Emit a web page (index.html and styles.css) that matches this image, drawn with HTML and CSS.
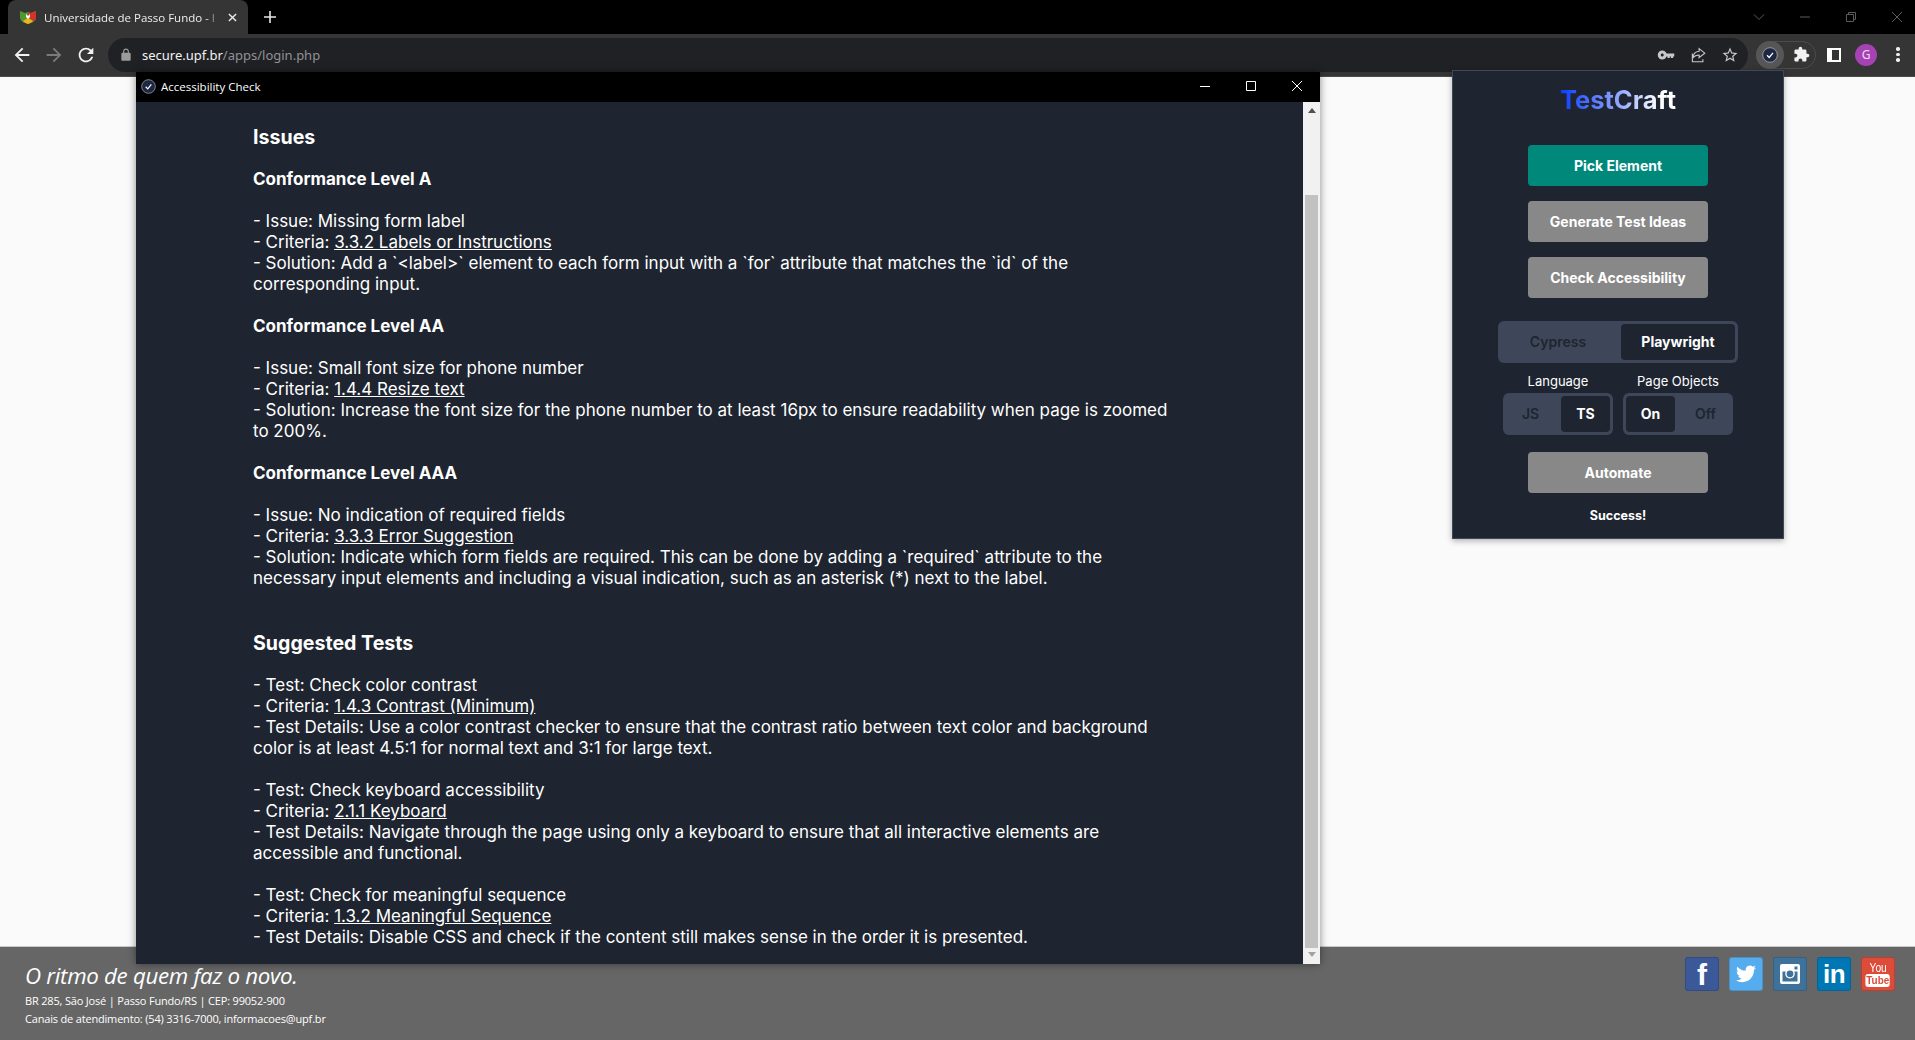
FILE: index.html
```html
<!DOCTYPE html>
<html lang="pt">
<head>
<meta charset="utf-8">
<title>Universidade de Passo Fundo</title>
<link rel="stylesheet" href="styles.css">
</head>
<body>
<div class="screen">
  <header class="tabstrip">
    <div class="tab">
      <svg class="favicon" viewBox="0 0 16 16"><path d="M0 2l5 2 3-1 3 1 5-2v6c0 4-4 6-8 7-4-1-8-3-8-7z" fill="#4f9a2e"/><path d="M8 3l3 1 5-2v6c0 2-1 3.500-2 4.500L8 8z" fill="#d3342a"/><path d="M3 12l5-3 5 3c-1.500 1.500-3 2.400-5 3-2-.6-3.500-1.500-5-3z" fill="#f2b01e"/><path d="M6 5l2 2 2-2v3l-2 2-2-2z" fill="#fff"/></svg>
      <span class="tab-title">Universidade de Passo Fundo - I</span>
      <svg class="tab-close" viewBox="0 0 10 10"><path d="M1 1l8 8M9 1l-8 8"/></svg>
    </div>
    <svg class="newtab" viewBox="0 0 12 12"><path d="M6 0v12M0 6h12"/></svg>
    <div class="caption">
      <svg class="cap-ic" viewBox="0 0 12 12"><path d="M1 3.500l5 5 5-5"/></svg>
      <svg class="cap-ic" viewBox="0 0 12 12"><path d="M1 6h10"/></svg>
      <svg class="cap-ic" viewBox="0 0 12 12"><path d="M1.500 3.500h7v7h-7zM3.500 3.500v-2h7v7h-2"/></svg>
      <svg class="cap-ic" viewBox="0 0 12 12"><path d="M1 1l10 10M11 1L1 11"/></svg>
    </div>
  </header>
  <nav class="toolbar">
    <svg class="nav-ic" viewBox="0 0 24 24"><path d="M20 11H7.830l5.590-5.590L12 4l-8 8 8 8 1.410-1.410L7.830 13H20v-2z"/></svg>
    <svg class="nav-ic dim" viewBox="0 0 24 24"><path d="M4 11h12.170l-5.590-5.590L12 4l8 8-8 8-1.410-1.410L16.170 13H4v-2z"/></svg>
    <svg class="nav-ic" viewBox="0 0 24 24"><path d="M17.650 6.350A7.958 7.958 0 0 0 12 4c-4.420 0-7.990 3.580-7.990 8s3.570 8 7.990 8c3.730 0 6.840-2.550 7.730-6h-2.080A5.990 5.990 0 0 1 12 18c-3.310 0-6-2.690-6-6s2.690-6 6-6c1.660 0 3.140.690 4.220 1.780L13 11h7V4l-2.350 2.350z"/></svg>
    <div class="omnibox">
      <svg class="lock" viewBox="0 0 24 24"><path d="M18 8h-1V6c0-2.760-2.240-5-5-5S7 3.240 7 6v2H6c-1.100 0-2 .9-2 2v10c0 1.100.9 2 2 2h12c1.100 0 2-.9 2-2V10c0-1.100-.9-2-2-2zM9 6c0-1.660 1.340-3 3-3s3 1.340 3 3v2H9V6z"/></svg>
      <span class="url"><span class="host">secure.upf.br</span>/apps/login.php</span>
      <div class="omni-icons">
        <svg class="omni-ic" viewBox="0 0 24 24"><path d="M12.650 10C11.830 7.670 9.610 6 7 6c-3.310 0-6 2.690-6 6s2.690 6 6 6c2.610 0 4.830-1.670 5.650-4H14v2h3v-2h1.500v2h3v-2H23v-4H12.650zM7 14c-1.100 0-2-.9-2-2s.9-2 2-2 2 .9 2 2-.9 2-2 2z"/></svg>
        <svg class="omni-ic line" viewBox="0 0 24 24"><path d="M4.500 10v11h14v-3.500M13.500 3.500l7.500 6-7.500 6v-3.500c-4 0-6.500 1.500-8.500 4 .5-4.500 3.500-8.500 8.500-9z"/></svg>
        <svg class="omni-ic" viewBox="0 0 24 24"><path d="M22 9.240l-7.190-.62L12 2 9.190 8.630 2 9.240l5.460 4.730L5.820 21 12 17.270 18.180 21l-1.630-7.030L22 9.240zM12 15.400l-3.760 2.270 1-4.280-3.320-2.880 4.380-.38L12 6.100l1.710 4.040 4.380.38-3.320 2.880 1 4.280L12 15.400z"/></svg>
      </div>
    </div>
    <div class="ext-pill">
      <div class="ext-active">
        <svg class="ext-logo" viewBox="0 0 16 16"><circle cx="8" cy="8" r="7.300"/><path d="M5 8.300l2.200 2.200L11 5.800"/></svg>
      </div>
      <svg class="puzzle" viewBox="0 0 24 24"><path d="M20.500 11H19V7c0-1.100-.9-2-2-2h-4V3.500C13 2.120 11.880 1 10.500 1S8 2.120 8 3.500V5H4c-1.100 0-1.990.9-1.990 2v3.800H3.500c1.490 0 2.700 1.210 2.700 2.700s-1.210 2.700-2.700 2.700H2V20c0 1.100.9 2 2 2h3.800v-1.500c0-1.490 1.210-2.700 2.700-2.700 1.490 0 2.700 1.210 2.700 2.700V22H17c1.100 0 2-.9 2-2v-4h1.500c1.380 0 2.500-1.120 2.500-2.500S21.880 11 20.500 11z"/></svg>
    </div>
    <div class="sidepanel"><span class="sidepanel-inner"></span></div>
    <div class="avatar">G</div>
    <div class="kebab"><span></span><span></span><span></span></div>
  </nav>
  <main class="page"></main>
  <footer class="footer">
    <div class="footer-text">
      <p class="slogan">O ritmo de quem faz o novo.</p>
      <p class="addr">BR 285, São José | Passo Fundo/RS | CEP: 99052-900</p>
      <p class="addr">Canais de atendimento: (54) 3316-7000, informacoes@upf.br</p>
    </div>
    <div class="social">
      <span class="soc fb">f</span>
      <span class="soc tw"><svg viewBox="0 0 24 24"><path d="M23.953 4.570a10 10 0 01-2.825.775 4.958 4.958 0 002.163-3.128c-.95.555-2.005.959-3.127 1.184a4.920 4.920 0 00-8.384 4.482C7.690 8.095 4.067 6.130 1.640 3.162a4.822 4.822 0 00-.666 2.475c0 1.710.87 3.213 2.188 4.096a4.904 4.904 0 01-2.228-.616v.06a4.923 4.923 0 003.946 4.827 4.996 4.996 0 01-2.212.085 4.936 4.936 0 004.604 3.417 9.867 9.867 0 01-6.102 2.105c-.39 0-.779-.023-1.170-.067a13.995 13.995 0 007.557 2.209c9.053 0 13.998-7.496 13.998-13.985 0-.21 0-.42-.015-.63A9.935 9.935 0 0024 4.590z"/></svg></span>
      <span class="soc ig"><svg viewBox="0 0 20 20"><path fill-rule="evenodd" d="M2 0h16a2 2 0 012 2v16a2 2 0 01-2 2H2a2 2 0 01-2-2V2a2 2 0 012-2zm.5 7.500v10h15v-10h-3.200a4.800 4.800 0 11-8.600 0zM10 6.400a3.400 3.400 0 100 6.800 3.400 3.400 0 000-6.800zM14.500 2.500v3h3v-3z"/></svg></span>
      <span class="soc li">in</span>
      <span class="soc yt"><span class="yt-you">You</span><span class="yt-tube">Tube</span></span>
    </div>
  </footer>

  <section class="window">
    <div class="win-title">
      <svg class="win-logo" viewBox="0 0 16 16"><circle cx="8" cy="8" r="7.300"/><path d="M5 8.300l2.200 2.200L11 5.800"/></svg>
      <span class="win-name">Accessibility Check</span>
      <div class="win-controls">
        <svg class="win-ic" viewBox="0 0 12 12"><path d="M1 6.500h10"/></svg>
        <svg class="win-ic" viewBox="0 0 12 12"><path d="M1.500 1.500h9v9h-9z"/></svg>
        <svg class="win-ic" viewBox="0 0 12 12"><path d="M1 1l10 10M11 1L1 11"/></svg>
      </div>
    </div>
    <div class="win-body">
      <article class="report">
        <h2 class="h-issues">Issues</h2>
        <h3>Conformance Level A</h3>
        <p>- Issue: Missing form label<br>- Criteria: <a href="#">3.3.2 Labels or Instructions</a><br>- Solution: Add a `&lt;label&gt;` element to each form input with a `for` attribute that matches the `id` of the<br>corresponding input.</p>
        <h3>Conformance Level AA</h3>
        <p>- Issue: Small font size for phone number<br>- Criteria: <a href="#">1.4.4 Resize text</a><br>- Solution: Increase the font size for the phone number to at least 16px to ensure readability when page is zoomed<br>to 200%.</p>
        <h3>Conformance Level AAA</h3>
        <p>- Issue: No indication of required fields<br>- Criteria: <a href="#">3.3.3 Error Suggestion</a><br>- Solution: Indicate which form fields are required. This can be done by adding a `required` attribute to the<br>necessary input elements and including a visual indication, such as an asterisk (*) next to the label.</p>
        <h2 class="h-tests">Suggested Tests</h2>
        <p>- Test: Check color contrast<br>- Criteria: <a href="#">1.4.3 Contrast (Minimum)</a><br>- Test Details: Use a color contrast checker to ensure that the contrast ratio between text color and background<br>color is at least 4.5:1 for normal text and 3:1 for large text.</p>
        <p>- Test: Check keyboard accessibility<br>- Criteria: <a href="#">2.1.1 Keyboard</a><br>- Test Details: Navigate through the page using only a keyboard to ensure that all interactive elements are<br>accessible and functional.</p>
        <p>- Test: Check for meaningful sequence<br>- Criteria: <a href="#">1.3.2 Meaningful Sequence</a><br>- Test Details: Disable CSS and check if the content still makes sense in the order it is presented.</p>
      </article>
      <div class="scrollbar">
        <span class="arrow-up"></span>
        <span class="thumb"></span>
        <span class="arrow-down"></span>
      </div>
    </div>
  </section>

  <aside class="popup">
    <h1 class="brand">TestCraft</h1>
    <div class="actions">
      <button class="btn teal">Pick Element</button>
      <button class="btn">Generate Test Ideas</button>
      <button class="btn">Check Accessibility</button>
    </div>
    <div class="seg seg-wide"><span class="opt">Cypress</span><span class="opt on">Playwright</span></div>
    <div class="options">
      <div class="opt-col">
        <span class="opt-label">Language</span>
        <div class="seg"><span class="opt">JS</span><span class="opt on">TS</span></div>
      </div>
      <div class="opt-col">
        <span class="opt-label">Page Objects</span>
        <div class="seg"><span class="opt on">On</span><span class="opt">Off</span></div>
      </div>
    </div>
    <button class="btn automate">Automate</button>
    <p class="status">Success!</p>
  </aside>
</div>
</body>
</html>
```

FILE: styles.css
```css
* { box-sizing: border-box; }
html, body { margin: 0; height: 100%; overflow: hidden; }
body { font-family: "Open Sans", sans-serif; background: #fafafa; }
svg { display: block; flex: none; }
p, h1, h2, h3 { margin: 0; }

.screen { position: relative; width: 1915px; height: 1040px; display: flex; flex-direction: column; }

/* browser chrome */
.tabstrip { height: 34px; background: #000; display: flex; align-items: center; padding-left: 8px; flex: none; }
.tab { width: 240px; height: 34px; background: #353535; border-radius: 8px 8px 0 0; display: flex; align-items: center; padding: 0 11px 0 12px; color: #eee; font-size: 11.500px; }
.favicon { width: 16px; height: 16px; margin-right: 8px; }
.tab-title { flex: 1; white-space: nowrap; -webkit-mask-image: linear-gradient(to right, #000 92%, transparent 100%); mask-image: linear-gradient(to right, #000 92%, transparent 100%); }
.tab-close { width: 9px; height: 9px; margin-left: 8px; fill: none; stroke: #e8e8e8; stroke-width: 1.600; }
.newtab { width: 12px; height: 12px; margin-left: 16px; fill: none; stroke: #e8e8e8; stroke-width: 1.600; }
.caption { margin-left: auto; display: flex; gap: 34px; padding-right: 12px; }
.cap-ic { width: 12px; height: 12px; fill: none; stroke: #5c5c5c; stroke-width: 1; }

.toolbar { height: 43px; background: #353535; border-bottom: 1px solid #4a4a4a; display: flex; align-items: center; padding: 0 0 1px 11px; flex: none; }
.nav-ic { width: 22px; height: 22px; fill: #f1f1f1; margin-right: 10px; }
.nav-ic.dim { fill: #7b7b7b; }
.omnibox { width: 1640px; height: 34px; margin-left: 1px; border-radius: 17px; background: #202124; display: flex; align-items: center; padding-left: 11px; }
.lock { width: 14px; height: 14px; fill: #9b9b9b; margin-right: 9px; }
.url { font-family: "Noto Sans", sans-serif; font-size: 13px; color: #8f9296; }
.host { color: #f1f3f4; }
.omni-icons { margin-left: auto; display: flex; gap: 14px; padding-right: 9px; }
.omni-ic { width: 18px; height: 18px; fill: #c7c7c7; }
.omni-ic.line { fill: none; stroke: #c7c7c7; stroke-width: 1.500; }

.ext-pill { width: 60px; height: 28px; margin-left: 8px; border: 1px solid #4b4b4b; border-radius: 14px; display: flex; align-items: center; }
.ext-active { width: 28px; height: 28px; margin: -1px 0 -1px -1px; border-radius: 50%; background: #565656; display: flex; align-items: center; justify-content: center; }
.ext-logo { width: 16px; height: 16px; }
.ext-logo circle, .win-logo circle { fill: #1e2742; stroke: #b8bcc6; stroke-width: .7; }
.ext-logo path, .win-logo path { fill: none; stroke: #fff; stroke-width: 1.300; }
.puzzle { width: 17px; height: 17px; fill: #f1f1f1; margin-left: 9px; }
.sidepanel { width: 14px; height: 14px; margin-left: 11px; border: 2px solid #fff; border-left-width: 3px; background: #fff; display: flex; justify-content: flex-end; }
.sidepanel-inner { width: 7px; background: #353535; }
.avatar { width: 22px; height: 22px; margin-left: 14px; border-radius: 50%; background: #a742b5; color: #f3ddf6; font-family: "Noto Sans", sans-serif; font-size: 12px; display: flex; align-items: center; justify-content: center; }
.kebab { width: 4px; margin-left: 19px; display: flex; flex-direction: column; gap: 2px; }
.kebab span { width: 3.500px; height: 3.500px; background: #f1f1f1; border-radius: 50%; }

.page { flex: 1; background: #fafafa; }

/* footer */
.footer { height: 94px; background: #666; border-top: 1px solid #c9c9c9; display: flex; justify-content: space-between; padding: 13px 20px 0 25px; color: #fff; flex: none; }
.slogan { font-family: "Open Sans", sans-serif; font-style: italic; font-size: 22.300px; line-height: 31px; letter-spacing: -.3px; margin-bottom: 1px; }
.addr { font-family: "Open Sans", sans-serif; font-size: 11px; line-height: 18px; letter-spacing: -.18px; }
.social { display: flex; gap: 10px; margin-top: -3px; }
.soc { width: 34px; height: 34px; border-radius: 3px; border: 1px solid rgba(0,0,0,.15); display: flex; flex-direction: column; align-items: center; justify-content: center; color: #fff; font-family: "Liberation Sans", sans-serif; font-weight: 700; overflow: hidden; }
.soc svg { fill: #fff; }
.fb { background: #3b5998; font-size: 30px; line-height: 34px; padding-top: 2px; }
.tw { background: #55acee; }
.tw svg { width: 20px; height: 20px; }
.ig { background: #3f729b; }
.ig svg { width: 20px; height: 20px; }
.li { background: #0077b5; font-size: 26px; line-height: 34px; letter-spacing: -.5px; }
.yt { background: #dd4b39; }
.yt-you { font-size: 12px; line-height: 12px; font-weight: 400; transform: scaleX(.85); }
.yt-tube { font-size: 11px; line-height: 13px; padding: 0 1px; background: #fff; color: #dd4b39; border-radius: 3px; transform: scaleX(.9); }

/* floating windows */
.window { position: absolute; left: 136px; top: 72px; width: 1184px; height: 892px; display: flex; flex-direction: column; box-shadow: 0 0 8px rgba(0,0,0,.45); }
.win-title { height: 30px; background: #000; display: flex; align-items: center; padding: 0 0 2px 5px; color: #fff; flex: none; }
.win-logo { width: 15px; height: 15px; margin-right: 5px; }
.win-name { font-size: 11.500px; }
.win-controls { margin-left: auto; display: flex; gap: 34px; padding-right: 17px; }
.win-ic { width: 12px; height: 12px; fill: none; stroke: #fff; stroke-width: 1; }
.win-body { flex: 1; display: flex; min-height: 0; }
.report { flex: 1; background: #1e2530; color: #fff; padding: 22px 0 0 117px; font-family: Inter, sans-serif; font-size: 17px; line-height: 21px; overflow: hidden; white-space: nowrap; }
.report h2 { font-size: 19.600px; line-height: 26px; font-weight: 700; }
.report h3 { font-size: 17px; line-height: 21px; font-weight: 700; margin-bottom: 21px; }
.report p { margin-bottom: 21px; }
.report a { color: #fff; }
.h-issues { margin-bottom: 19px; }
.h-tests { margin: 41px 0 19px; }
.scrollbar { width: 17px; background: #f1f1f1; display: flex; flex-direction: column; align-items: center; padding: 6px 0 7px; }
.arrow-up { border: 4px solid transparent; border-top: 0; border-bottom: 5px solid #505050; margin-bottom: 82px; }
.thumb { width: 13px; flex: 1; background: #c1c1c1; margin: 0 0 4px; }
.arrow-down { border: 4px solid transparent; border-bottom: 0; border-top: 5px solid #a3a3a3; }

.popup { position: absolute; left: 1452px; top: 70px; width: 332px; height: 469px; background: #1e2530; border: 1px solid #3f4854; box-shadow: 0 2px 6px rgba(0,0,0,.3); display: flex; flex-direction: column; align-items: center; color: #fff; font-family: Inter, sans-serif; padding-top: 14px; }
.brand { font-size: 25.500px; line-height: 30px; font-weight: 700; background: linear-gradient(to right, #0a3cff 0%, #8fa5ff 50%, #fff 85%); -webkit-background-clip: text; background-clip: text; color: transparent; margin-bottom: 30px; }
.actions { display: flex; flex-direction: column; gap: 15px; margin-bottom: 23px; }
.btn { width: 180px; height: 41px; border: 0; border-radius: 4px; background: #888; color: #fff; font-family: Inter, sans-serif; font-size: 14px; font-weight: 700; padding: 0 0 1px; }
.btn.teal { background: #00897b; }
.seg { width: 110px; height: 42px; padding: 3px; background: #3d4759; border-radius: 6px; display: flex; justify-content: space-between; }
.seg-wide { width: 240px; }
.opt { flex: none; width: 49px; display: flex; align-items: center; justify-content: center; font-size: 14px; font-weight: 600; color: #1e2530; border-radius: 4px; padding-bottom: 1px; }
.opt.on { background: #1e2530; color: #fff; font-weight: 700; }
.seg-wide .opt { width: 114px; }
.options { display: flex; gap: 10px; margin-top: 9px; margin-bottom: 17px; }
.opt-col { display: flex; flex-direction: column; align-items: center; gap: 3px; }
.opt-label { font-size: 13px; line-height: 18px; }
.automate { flex: none; }
.status { font-size: 12.500px; font-weight: 700; line-height: 18px; margin-top: 14px; }
```
